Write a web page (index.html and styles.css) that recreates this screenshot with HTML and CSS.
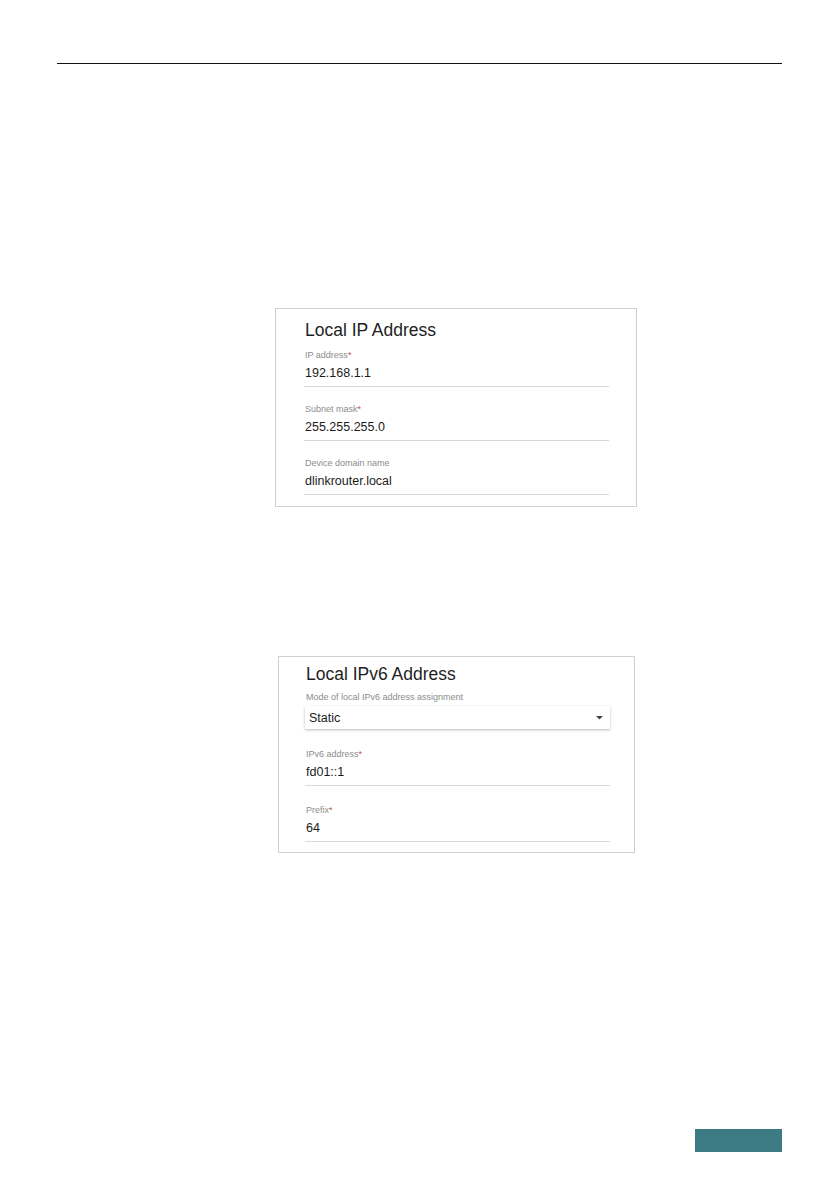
FILE: index.html
```html
<!DOCTYPE html>
<html lang="en">
<head>
<meta charset="utf-8">
<title>Local addresses</title>
<link rel="stylesheet" href="styles.css">
</head>
<body>
<div class="page">
  <div class="rule"></div>

  <section class="card card-ipv4">
    <h2 class="card-title">Local IP Address</h2>
    <div class="fields fields-ipv4">
      <div class="field">
        <div class="label">IP address<span class="req">*</span></div>
        <div class="value">192.168.1.1</div>
      </div>
      <div class="field">
        <div class="label">Subnet mask<span class="req">*</span></div>
        <div class="value">255.255.255.0</div>
      </div>
      <div class="field">
        <div class="label">Device domain name</div>
        <div class="value">dlinkrouter.local</div>
      </div>
    </div>
  </section>

  <section class="card card-ipv6">
    <h2 class="card-title card-title-tight">Local IPv6 Address</h2>
    <div class="select-wrap">
      <div class="label label-select">Mode of local IPv6 address assignment</div>
      <div class="select">
        <span class="select-text">Static</span>
        <svg class="caret" width="7" height="4" viewBox="0 0 7 4"><path d="M0 0 H7 L3.5 3.5 Z" fill="#444"/></svg>
      </div>
    </div>
    <div class="fields fields-ipv6">
      <div class="field">
        <div class="label">IPv6 address<span class="req">*</span></div>
        <div class="value">fd01::1</div>
      </div>
      <div class="field">
        <div class="label">Prefix<span class="req">*</span></div>
        <div class="value">64</div>
      </div>
    </div>
  </section>

  <div class="footer-tab"></div>
</div>
</body>
</html>
```

FILE: styles.css
```css
html, body {
  margin: 0;
  padding: 0;
  background: #ffffff;
}

body {
  font-family: "Liberation Sans", Arial, sans-serif;
  color: #222222;
}

.page {
  width: 840px;
  height: 1190px;
  padding-top: 63px;
  box-sizing: border-box;
}

.rule {
  margin-left: 57px;
  width: 725px;
  height: 1px;
  background: #111111;
}

.card {
  box-sizing: border-box;
  border: 1px solid #cfcfcf;
  background: #ffffff;
  display: flex;
  flex-direction: column;
}

.card-ipv4 {
  margin-top: 244px;
  margin-left: 275px;
  width: 362px;
  height: 199px;
  padding: 11px 27px 11px 28px;
}

.card-ipv6 {
  margin-top: 149px;
  margin-left: 278px;
  width: 357px;
  height: 197px;
  padding: 7px 24px 8px 26px;
}

.card-title {
  margin: 0 0 9px 0;
  font-size: 17.5px;
  line-height: 20px;
  font-weight: normal;
  color: #1e1e1e;
  padding-left: 1px;
}

.card-title-tight {
  margin-bottom: 7px;
}

.fields {
  display: flex;
  flex-direction: column;
}

.fields-ipv4 {
  gap: 16px;
}

.fields-ipv6 {
  gap: 18px;
  margin-top: 19px;
}

.field {
  border-bottom: 1px solid #d9d9d9;
  padding-bottom: 5px;
}

.label {
  font-size: 9px;
  line-height: 12px;
  color: #8c8c8c;
  margin-bottom: 4px;
  padding-left: 1px;
}

.req {
  color: #d0463c;
}

.value {
  font-size: 12.5px;
  line-height: 16px;
  color: #1c1c1c;
  padding-left: 1px;
}

.label-select {
  margin-bottom: 3px;
}

.select {
  display: flex;
  align-items: center;
  justify-content: space-between;
  height: 23px;
  box-sizing: border-box;
  padding: 0 7px 0 4px;
  background: #ffffff;
  box-shadow: 0 1px 3px rgba(0, 0, 0, 0.28);
  border-radius: 1px;
}

.select-text {
  font-size: 12.5px;
  line-height: 16px;
  color: #1c1c1c;
}

.caret {
  display: block;
}

.footer-tab {
  margin-top: 276px;
  margin-left: 695px;
  width: 87px;
  height: 23px;
  background: #3c7a84;
}
```
